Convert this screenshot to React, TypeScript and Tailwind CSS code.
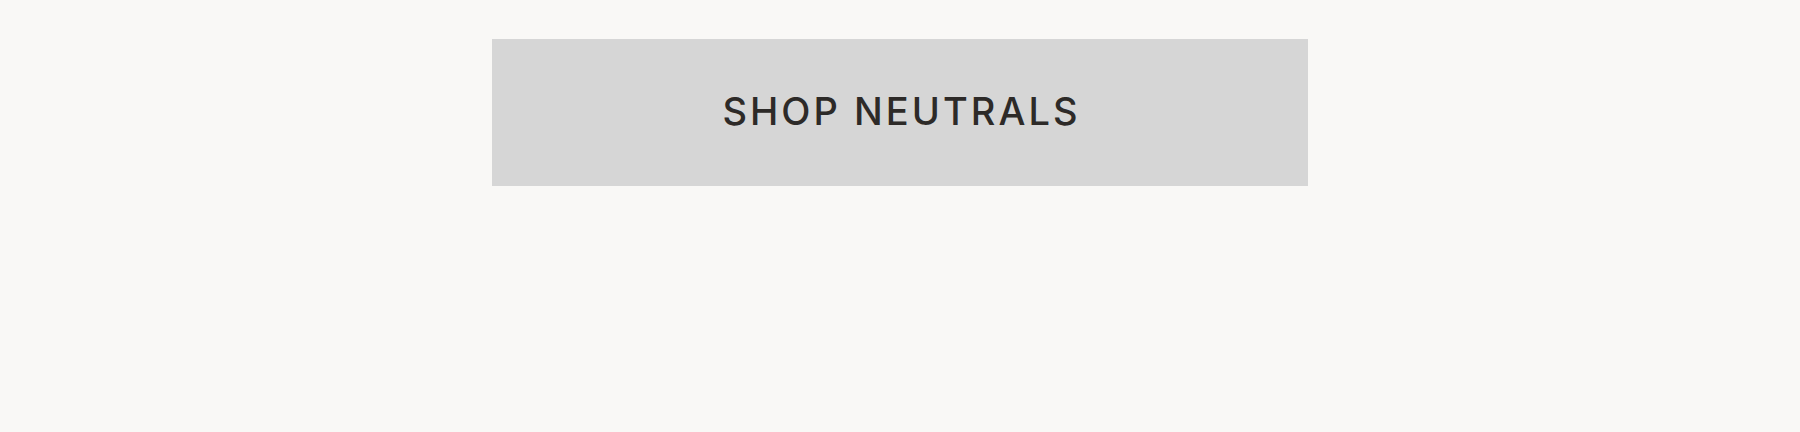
export default function App() {
  return (
    <main className="min-h-[432px] w-full bg-[#f9f8f6] pt-[39px]">
      <div className="mx-auto flex h-[147px] w-[816px] items-center justify-center bg-[#d6d6d6]">
        <a
          href="#"
          className="mb-[3px] pl-[0.08em] text-[38px] font-medium uppercase leading-none tracking-[0.08em] text-[#2d2a28] [font-family:Inter,'Liberation_Sans',sans-serif]"
        >
          Shop Neutrals
        </a>
      </div>
    </main>
  );
}
